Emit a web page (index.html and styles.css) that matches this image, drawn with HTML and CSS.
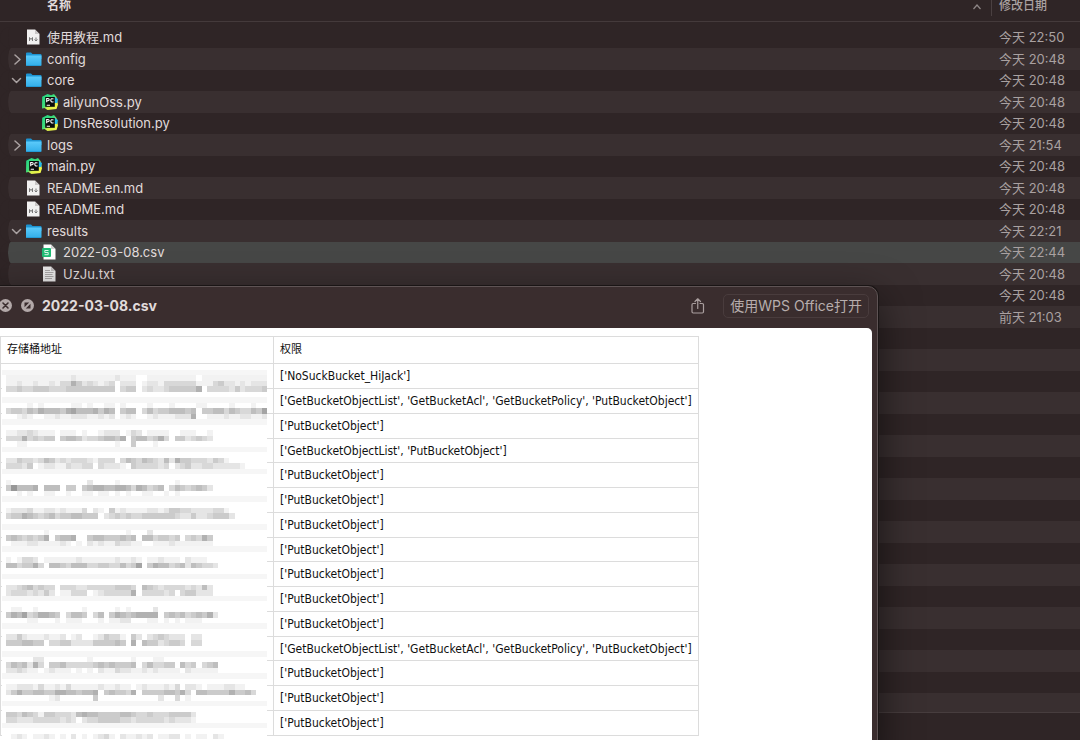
FILE: index.html
```html
<!DOCTYPE html>
<html lang="zh-CN">
<head>
    <meta charset="UTF-8">
    <meta name="viewport" content="width=device-width, initial-scale=1.0">
    <title>2022-03-08.csv</title>
    <link rel="stylesheet" href="styles.css">
</head>
<body>
    <!-- Shared icons -->
    <svg class="sprite" aria-hidden="true">
        <defs>
            <linearGradient id="folder-fill" x1="0" y1="0" x2="0" y2="1">
                <stop offset="0" stop-color="#5ccbfb"/>
                <stop offset="1" stop-color="#31aee9"/>
            </linearGradient>
            <linearGradient id="py-fill" x1="0" y1="0" x2="1" y2="1">
                <stop offset="0" stop-color="#21d789"/>
                <stop offset="0.45" stop-color="#3fdc78"/>
                <stop offset="0.6" stop-color="#d9f04a"/>
                <stop offset="1" stop-color="#fcf84a"/>
            </linearGradient>
        </defs>
        <symbol id="right" viewBox="0 0 12 12"><path d="M4 2l5 4.500-5 4.500" fill="none" stroke="#aaa2a2" stroke-width="1.500" stroke-linecap="round" stroke-linejoin="round"/></symbol>
        <symbol id="down" viewBox="0 0 12 12"><path d="M1.500 4.500l4 4 4-4" fill="none" stroke="#aaa2a2" stroke-width="1.500" stroke-linecap="round" stroke-linejoin="round"/></symbol>
        <symbol id="folder" viewBox="0 0 16 16">
            <path d="M0 2.500Q0 1.500 1 1.500H5L6.500 3H14.500Q15.500 3 15.500 4V8H0z" fill="#1d94d2"/>
            <path d="M0 4.500H15.500V14Q15.500 15 14.500 15H1Q0 15 0 14z" fill="url(#folder-fill)"/>
            <path d="M.5 14.500H15" stroke="#249bd6"/>
        </symbol>
        <symbol id="md" viewBox="0 0 16 16">
            <path d="M1 .5H9L13.500 5V15.500H1z" fill="#f1f0f0"/>
            <path d="M9 .5V5H13.500z" fill="#c9c6c6"/>
            <path d="M3.500 12V8.500L5 10.500 6.500 8.500V12M10 8.500V12M8.500 10.500L10 12 11.500 10.500" fill="none" stroke="#777" stroke-width="1"/>
        </symbol>
        <symbol id="txt" viewBox="0 0 16 16">
            <path d="M1 .5H9L13.500 5V15.500H1z" fill="#e9e8e8"/>
            <path d="M9 .5V5H13.500z" fill="#bdbaba"/>
            <path d="M3 4.500H8M3 6.500H11.500M3 8.500H10.500M3 10.500H11.500M3 12.500H10" stroke="#a9a6a6" stroke-width="1"/>
        </symbol>
        <symbol id="csv" viewBox="0 0 16 16">
            <path d="M1.500 .5H9L13.500 5V15.500H1.500z" fill="#fff"/>
            <path d="M9 .5V5H13.500z" fill="#cfd3d0"/>
            <rect x="0" y="4" width="9" height="9" rx="1" fill="#1fbb75"/>
            <path d="M6.500 6.500H2.800V8.500H6.200V10.700H2.500" fill="none" stroke="#d8f5e6" stroke-width="1"/>
        </symbol>
        <symbol id="py" viewBox="0 0 16 16">
            <path d="M.2 2.800L5.500 0 9 1.200 12 0 14.500 3 16 10.500 14.500 15 5.500 16 2.500 14 0 14.500z" fill="url(#py-fill)"/>
            <path d="M12 2.500L16 5 15.200 9H12z" fill="#25b9e8"/>
            <rect x="3.200" y="3" width="9.600" height="9.800" fill="#0b0b0b"/>
            <path d="M4.700 8.200V4.500H6Q7.200 4.500 7.200 5.600T6 6.700H4.700M11.500 5Q8.800 4 8.800 6.300T11.500 7.700M4.700 11.300H8" fill="none" stroke="#fff" stroke-width="1.100"/>
        </symbol>
    </svg>

    <main class="finder">
        <table class="files">
            <thead>
                <tr>
                    <th class="name">名称<svg class="sort" width="8" height="6" viewBox="0 0 8 6"><path d="M.5 5L4 1l3.500 4" fill="none" stroke="#8f8787" stroke-width="1.200"/></svg></th>
                    <th class="date">修改日期</th>
                </tr>
            </thead>
            <tbody>
                <tr>
                    <td><div class="file"><i class="toggle"></i><svg class="icon"><use href="#md"/></svg>使用教程.md</div></td>
                    <td class="date">今天 22:50</td>
                </tr>
                <tr>
                    <td><div class="file"><svg class="toggle"><use href="#right"/></svg><svg class="icon"><use href="#folder"/></svg>config</div></td>
                    <td class="date">今天 20:48</td>
                </tr>
                <tr>
                    <td><div class="file"><svg class="toggle"><use href="#down"/></svg><svg class="icon"><use href="#folder"/></svg>core</div></td>
                    <td class="date">今天 20:48</td>
                </tr>
                <tr>
                    <td><div class="file nested"><i class="toggle"></i><svg class="icon"><use href="#py"/></svg>aliyunOss.py</div></td>
                    <td class="date">今天 20:48</td>
                </tr>
                <tr>
                    <td><div class="file nested"><i class="toggle"></i><svg class="icon"><use href="#py"/></svg>DnsResolution.py</div></td>
                    <td class="date">今天 20:48</td>
                </tr>
                <tr>
                    <td><div class="file"><svg class="toggle"><use href="#right"/></svg><svg class="icon"><use href="#folder"/></svg>logs</div></td>
                    <td class="date">今天 21:54</td>
                </tr>
                <tr>
                    <td><div class="file"><i class="toggle"></i><svg class="icon"><use href="#py"/></svg>main.py</div></td>
                    <td class="date">今天 20:48</td>
                </tr>
                <tr>
                    <td><div class="file"><i class="toggle"></i><svg class="icon"><use href="#md"/></svg>README.en.md</div></td>
                    <td class="date">今天 20:48</td>
                </tr>
                <tr>
                    <td><div class="file"><i class="toggle"></i><svg class="icon"><use href="#md"/></svg>README.md</div></td>
                    <td class="date">今天 20:48</td>
                </tr>
                <tr>
                    <td><div class="file"><svg class="toggle"><use href="#down"/></svg><svg class="icon"><use href="#folder"/></svg>results</div></td>
                    <td class="date">今天 22:21</td>
                </tr>
                <tr class="selected">
                    <td><div class="file nested"><i class="toggle"></i><svg class="icon"><use href="#csv"/></svg>2022-03-08.csv</div></td>
                    <td class="date">今天 22:44</td>
                </tr>
                <tr>
                    <td><div class="file nested"><i class="toggle"></i><svg class="icon"><use href="#txt"/></svg>UzJu.txt</div></td>
                    <td class="date">今天 20:48</td>
                </tr>
                <tr>
                    <td></td>
                    <td class="date">今天 20:48</td>
                </tr>
                <tr>
                    <td></td>
                    <td class="date">前天 21:03</td>
                </tr>
            </tbody>
        </table>
        <div class="empty-rows"></div>
        <div class="path-bar"></div>
    </main>

    <section class="preview">
        <header class="titlebar">
            <button class="round" aria-label="关闭"><svg width="13" height="13" viewBox="0 0 13 13"><circle cx="6.500" cy="6.500" r="6.500" fill="#b3a9a9"/><path d="M4 4l5 5M9 4l-5 5" stroke="#3a2d2e" stroke-width="1.600" stroke-linecap="round"/></svg></button>
            <button class="round" aria-label="全屏"><svg width="13" height="13" viewBox="0 0 13 13"><circle cx="6.500" cy="6.500" r="6.500" fill="#b3a9a9"/><path d="M3.500 8.200V3.500H8.200zM9.500 4.800V9.500H4.800z" fill="#3a2d2e"/></svg></button>
            <h1>2022-03-08.csv</h1>
            <button class="share" aria-label="共享"><svg width="14" height="16" viewBox="0 0 14 16" fill="none" stroke="#aa9f9f" stroke-width="1.200" stroke-linecap="round" stroke-linejoin="round"><path d="M4.500 5.500H2.200Q1 5.500 1 6.700V13.800Q1 15 2.200 15H11.300Q12.500 15 12.500 13.800V6.700Q12.500 5.500 11.300 5.500H9M6.750 10.500V1M4 3.500L6.750 .8 9.500 3.500"/></svg></button>
            <button class="open-with">使用WPS Office打开</button>
        </header>
        <div class="sheet-area">
            <table class="sheet">
                <thead>
                    <tr><th>存储桶地址</th><th>权限</th></tr>
                </thead>
                <tbody>
                    <tr><td></td><td>['NoSuckBucket_HiJack']</td></tr>
                    <tr><td></td><td>['GetBucketObjectList', 'GetBucketAcl', 'GetBucketPolicy', 'PutBucketObject']</td></tr>
                    <tr><td></td><td>['PutBucketObject']</td></tr>
                    <tr><td></td><td>['GetBucketObjectList', 'PutBucketObject']</td></tr>
                    <tr><td></td><td>['PutBucketObject']</td></tr>
                    <tr><td></td><td>['PutBucketObject']</td></tr>
                    <tr><td></td><td>['PutBucketObject']</td></tr>
                    <tr><td></td><td>['PutBucketObject']</td></tr>
                    <tr><td></td><td>['PutBucketObject']</td></tr>
                    <tr><td></td><td>['PutBucketObject']</td></tr>
                    <tr><td></td><td>['PutBucketObject']</td></tr>
                    <tr><td></td><td>['GetBucketObjectList', 'GetBucketAcl', 'GetBucketPolicy', 'PutBucketObject']</td></tr>
                    <tr><td></td><td>['PutBucketObject']</td></tr>
                    <tr><td></td><td>['PutBucketObject']</td></tr>
                    <tr><td></td><td>['PutBucketObject']</td></tr>
                </tbody>
            </table>
            <svg class="mosaic" viewBox="0 0 265 377" shape-rendering="crispEdges" aria-hidden="true"></svg>
        </div>
    </section>

    <script src="mosaic.js"></script>
</body>
</html>
```

FILE: styles.css
```css
* {
    margin: 0;
    padding: 0;
    box-sizing: border-box;
}

body {
    height: 100vh;
    overflow: hidden;
    position: relative;
    background-color: #2f2526;
    color: #e0dbdb;
    font-family: Inter, "Noto Sans CJK SC", sans-serif;
    font-size: 13px;
}

button {
    border: none;
    background: none;
    color: inherit;
    font: inherit;
}

.sprite {
    position: absolute;
    width: 0;
    height: 0;
}

/* File list */
.finder {
    height: 100vh;
    display: flex;
    flex-direction: column;
}

.files {
    width: 100%;
    border-spacing: 0;
    table-layout: fixed;
    line-height: 18px;
}

.files th {
    height: 22px;
    padding-bottom: 9px;
    border-bottom: 1px solid #443a3b;
    font-size: 12px;
    font-weight: 500;
    line-height: 12px;
    text-align: left;
    vertical-align: top;
}

.files th.name {
    padding-left: 47px;
    font-weight: 700;
}

.sort {
    float: right;
    margin: 4px 10px 0 0;
}

.files .date {
    width: 89px;
    padding-left: 8px;
    color: #a9a1a1;
    white-space: nowrap;
}

.files th.date {
    background: linear-gradient(#4a4041, #4a4041) left top / 1px 16px no-repeat;
}

.files tbody::before {
    content: "";
    display: block;
    height: 5px;
}

.files td {
    height: 21px;
    padding-bottom: 1px;
}

.files tr:nth-child(even) td {
    height: 22px;
    background-color: #392f30;
}

.files td:first-child {
    padding-left: 3px;
    border-left: 8px solid #2f2526;
    border-radius: 13px 0 0 13px;
    background-clip: padding-box;
}

.files .selected td {
    background-color: #464746;
}

.file {
    display: flex;
    align-items: center;
}

.file.nested {
    padding-left: 16px;
}

.toggle {
    width: 12px;
    height: 12px;
    margin-right: 3px;
}

.icon {
    width: 16px;
    height: 16px;
    margin-right: 5px;
}

.empty-rows {
    flex: 1;
    background: repeating-linear-gradient(#2f2526 0, #2f2526 21px, #392f30 21px, #392f30 43px);
}

.path-bar {
    height: 28px;
    border-top: 1px solid #473d3e;
}

/* Quick look window, hangs over the left and bottom edges */
.preview {
    position: absolute;
    top: 286px;
    right: 202px;
    bottom: -20px;
    left: -16px;
    display: flex;
    flex-direction: column;
    padding: 0 5px;
    border: 1px solid #5e5354;
    border-radius: 10px;
    background-color: #3a2d2e;
    box-shadow: 0 0 0 1px #1a1515, 0 14px 40px rgba(0, 0, 0, 0.6);
}

.titlebar {
    height: 41px;
    display: flex;
    align-items: center;
    gap: 8px;
    padding: 0 3px 4px 9px;
}

.round {
    width: 13px;
    height: 13px;
    display: flex;
}

.round + .round {
    margin-left: 1px;
}

.titlebar h1 {
    flex: 1;
    font-size: 14px;
    font-weight: 700;
}

.share {
    width: 14px;
    height: 16px;
    display: flex;
    margin-right: 10px;
}

.open-with {
    height: 24px;
    padding: 0 6px;
    border: 1px solid #493c3d;
    border-radius: 5px;
    color: #b7adad;
    font-size: 14px;
    line-height: 20px;
    white-space: nowrap;
}

.sheet-area {
    position: relative;
    flex: 1;
    padding: 8px 0 0 10px;
    border-radius: 5px;
    background-color: #fff;
}

.sheet {
    border-collapse: collapse;
    color: #111;
    font-family: "DejaVu Sans Condensed", "Noto Sans CJK SC", sans-serif;
    font-size: 12px;
    line-height: 16px;
}

.sheet th,
.sheet td {
    height: 25px;
    padding: 0 6px;
    border: 1px solid #dcdcdc;
    font-weight: 400;
    text-align: left;
    white-space: nowrap;
}

.sheet th {
    height: 27px;
    font-size: 11px;
}

.sheet th:first-child {
    width: 273px;
}

.sheet tr:nth-child(4n) td {
    height: 24px;
}

/* Hides the bucket addresses */
.mosaic {
    position: absolute;
    top: 36px;
    left: 12px;
    width: 265px;
    height: 377px;
}
```

FILE: mosaic.js
```javascript
// Each band: block row, then one grey level per block
const bands = [
    [2, '111111111111211111112111001111111110111111111111'],
    [3, '112112112133642321230222012213333331113422121222'],
    [4, '334334443334444444440344023223444446033332423334'],
    [7, '000010100000110100110100001000100001100001000100'],
    [8, '344354655546755564650455035344555450445535433547'],
    [9, '001210011211222112120121001211122260011121122112'],
    [12, '11223211101110100122201320111100111001'],
    [13, '33363434404554233455460455346304423432'],
    [14, '00110000000000000000100400010000000000'],
    [17, '22433235423233321333035435432526443332431000'],
    [18, '33324012211322330322210433332302342233222221'],
    [21, '10000000000000020000100000000001000000'],
    [22, '48555605550440456655665365345035434542'],
    [23, '00101001100100110110101001100101000000'],
    [26, '122231122121113021041211112212443322223310'],
    [27, '344654345344554440234343344444432242234442'],
    [30, '00000001000000000000001000200000000000'],
    [31, '45434346045560045544454505534434034364'],
    [32, '01112211112101021211322110011121111111'],
    [35, '101332011111121111112112101121110211100'],
    [36, '553446305543555334433534704655345254332'],
    [40, '22345343303332233333444305432333323252'],
    [41, '23332324201133301233333603333230344222'],
    [44, '011001000000001000001010000200000000000'],
    [45, '465734665403554035046545666604545345462'],
    [46, '000011000101110001011220001101010111000'],
    [49, '224211121120120012433104202343222022'],
    [50, '444554403344222244445406054423443033'],
    [53, '000002200000000100000001000110000000000'],
    [54, '354526304453333345454445035334405340345'],
    [55, '223211012111010102113221121211110211111'],
    [58, '1122213112131111121121101211121302210111221100'],
    [59, '2464455446655455604544360444455463055444464453'],
    [60, '0000000012000000400000000000200301000000000000'],
    [63, '44354314433325655444455433433344442'],
    [64, '33222333332320233444433233333232221'],
    [67, '012101121010201012310211212011220101102100']
];

// Block rows of the faint grey stripes between two bands
const stripes = [1, 6, 10, 15, 19, 24, 29, 33, 38, 42, 47, 52, 56, 61, 65];

const mosaic = document.querySelector('.mosaic');
const blockWidth = 5.45;
const blockHeight = 5.52;

function addRect(x, y, width, height, fill) {
    const rect = document.createElementNS('http://www.w3.org/2000/svg', 'rect');
    rect.setAttribute('x', x);
    rect.setAttribute('y', y);
    rect.setAttribute('width', width);
    rect.setAttribute('height', height);
    rect.setAttribute('fill', fill);
    mosaic.appendChild(rect);
}

addRect(0, 0, 265, 377, '#fff');

stripes.forEach(row => {
    addRect(0, row * blockHeight, 265, blockHeight, '#f6f6f6');
});

bands.forEach(([row, levels]) => {
    [...levels].forEach((level, col) => {
        if (level !== '0') {
            const grey = 255 - level * 13;
            addRect(3.6 + col * blockWidth, row * blockHeight, blockWidth, blockHeight, `rgb(${grey}, ${grey}, ${grey})`);
        }
    });
});
```
